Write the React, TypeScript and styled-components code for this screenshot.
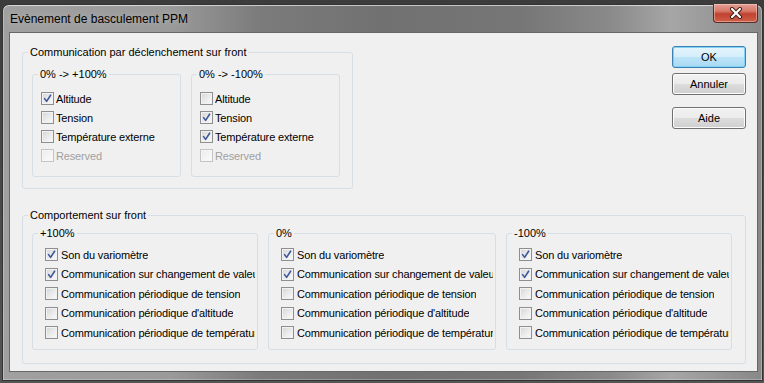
import React from 'react';
import styled, { createGlobalStyle } from 'styled-components';

// Global

const GlobalStyle = createGlobalStyle`
  html,
  body {
    margin: 0;
    padding: 0;
  }

  body {
    width: 764px;
    height: 383px;
    overflow: hidden;
    background: linear-gradient(180deg, #3c3c3c 0%, #555 100%);
    font-family: "Liberation Sans", Arial, sans-serif;
    font-size: 11px;
    color: #000;
  }
`;

// Styled-components

const Desktop = styled.div`
  width: 764px;
  height: 383px;
  box-sizing: border-box;
  padding: 4px 1px 2px 2px;
  display: flex;
`;

const Window = styled.div`
  flex: 1;
  display: flex;
  flex-direction: column;
  border: 1px solid #333;
  border-radius: 7px 7px 0 0;
  padding: 0 4px 8px 6px;
  background: linear-gradient(
    90deg,
    #a0a0a0 0%,
    #9a9a9a 22%,
    #7b7b7b 34%,
    #717171 50%,
    #767676 68%,
    #8a8a8a 80%,
    #a6a6a6 88%,
    #9a9a9a 93%,
    #888 100%
  );
  box-shadow: inset 0 1px 0 rgba(255, 255, 255, 0.6), inset 1px 0 0 rgba(255, 255, 255, 0.3),
    inset -1px 0 0 rgba(255, 255, 255, 0.3), inset 0 -1px 0 rgba(255, 255, 255, 0.25);
`;

const TitleBar = styled.div`
  height: 27px;
  display: flex;
  justify-content: space-between;
  align-items: flex-start;
`;

const Title = styled.span`
  align-self: center;
  padding: 1px 0 0 1px;
  font-size: 12px;
  color: #000;
  text-shadow: 0 0 6px rgba(255, 255, 255, 0.35);
`;

const CloseButton = styled.div`
  width: 45px;
  height: 19px;
  box-sizing: border-box;
  margin-top: -1px;
  display: flex;
  align-items: center;
  justify-content: center;
  border: 1px solid #5a2a24;
  border-top: none;
  border-radius: 0 0 4px 4px;
  background: linear-gradient(180deg, #e4a195 0%, #d67867 40%, #c2412f 55%, #cc6049 100%);
  box-shadow: inset 0 0 0 1px rgba(255, 220, 210, 0.45);
`;

const Client = styled.div`
  flex: 1;
  display: flex;
  flex-direction: column;
  border: 1px solid #686868;
  background: #f0f0f0;
  padding: 13px 11px 0 12px;
`;

const TopRow = styled.div`
  display: flex;
  justify-content: space-between;
  align-items: flex-start;
`;

const GroupBox = styled.fieldset<{ $w: number; $h: number; $mt?: number }>`
  box-sizing: border-box;
  width: ${(p) => p.$w}px;
  height: ${(p) => p.$h}px;
  margin: ${(p) => p.$mt || 0}px 0 0 0;
  padding: 0;
  border: 1px solid #d5dfe5;
  border-radius: 3px;
  min-width: 0;
`;

const Legend = styled.legend`
  margin-left: 5px;
  padding: 0 2px;
  font-size: 11px;
  line-height: 13px;
  color: #000;
`;

const GroupRow = styled.div<{ $pt: number }>`
  display: flex;
  gap: 10px;
  padding: ${(p) => p.$pt}px 0 0 9px;
`;

const OptionList = styled.div<{ $pt: number }>`
  display: flex;
  flex-direction: column;
  padding-top: ${(p) => p.$pt}px;
`;

const Option = styled.label<{ $h: number; $pl: number; $gap: number; $disabled?: boolean }>`
  height: ${(p) => p.$h}px;
  display: flex;
  align-items: center;
  gap: ${(p) => p.$gap}px;
  padding: 0 2px 0 ${(p) => p.$pl}px;
  color: ${(p) => (p.$disabled ? '#a0a0a0' : '#000')};
  white-space: nowrap;
  overflow: hidden;
`;

const Box = styled.span<{ $disabled?: boolean }>`
  flex: none;
  position: relative;
  width: 13px;
  height: 13px;
  box-sizing: border-box;
  border: 1px solid ${(p) => (p.$disabled ? '#c4c4c4' : '#8e8f8f')};
  background: ${(p) =>
    p.$disabled
      ? 'linear-gradient(135deg, #ececec 0%, #fbfbfb 100%)'
      : 'linear-gradient(135deg, #d2d4d7 0%, #e8e8e8 45%, #fbfbfb 100%)'};
  box-shadow: inset 0 0 0 1px ${(p) => (p.$disabled ? '#f6f6f6' : '#f2f2f2')};
`;

const Check = styled.svg`
  position: absolute;
  left: 0;
  top: 0;
`;

const LabelText = styled.span`
  overflow: hidden;
  white-space: nowrap;
  letter-spacing: -0.15px;
`;

const ButtonColumn = styled.div`
  display: flex;
  flex-direction: column;
`;

const Button = styled.button<{ $default?: boolean; $mt: number }>`
  width: 74px;
  height: 22px;
  margin-top: ${(p) => p.$mt}px;
  padding: 0;
  font-family: "Liberation Sans", Arial, sans-serif;
  font-size: 11px;
  color: #000;
  border-radius: 3px;
  border: 1px solid ${(p) => (p.$default ? '#3c7fb1' : '#707070')};
  background: ${(p) =>
    p.$default
      ? 'linear-gradient(180deg, #e5f4fc 0%, #d4eefb 50%, #bde4f8 50%, #a9d9f3 100%)'
      : 'linear-gradient(180deg, #f2f2f2 0%, #ebebeb 50%, #dddddd 50%, #cfcfcf 100%)'};
  box-shadow: inset 0 0 0 1px ${(p) => (p.$default ? '#7fd3f7' : '#fcfcfc')};
`;

// Data

type Item = { label: string; checked?: boolean; disabled?: boolean };

const leftTop: Item[] = [
  { label: 'Altitude', checked: true },
  { label: 'Tension' },
  { label: 'Température externe' },
  { label: 'Reserved', disabled: true },
];

const rightTop: Item[] = [
  { label: 'Altitude' },
  { label: 'Tension', checked: true },
  { label: 'Température externe', checked: true },
  { label: 'Reserved', disabled: true },
];

const behaviour: Item[] = [
  { label: 'Son du variomètre', checked: true },
  { label: 'Communication sur changement de valeur', checked: true },
  { label: 'Communication périodique de tension' },
  { label: "Communication périodique d'altitude" },
  { label: 'Communication périodique de température' },
];

const bottomGroups = [
  { title: '+100%', width: 226 },
  { title: '0%', width: 228 },
  { title: '-100%', width: 226 },
];

// JSX-Components

const CheckBox: React.FC<{ checked?: boolean; disabled?: boolean }> = ({ checked, disabled }) => (
  <Box $disabled={disabled}>
    {checked && (
      <Check width="11" height="11" viewBox="0 0 11 11">
        <path
          d="M2.6 5.6 L4.6 8.4 L8.6 2.2"
          fill="none"
          stroke="#40589a"
          strokeWidth="1.6"
          strokeLinecap="round"
          strokeLinejoin="round"
        />
      </Check>
    )}
  </Box>
);

const Options: React.FC<{ items: Item[]; rowH: number; pl: number; gap: number; pt: number }> = ({
  items,
  rowH,
  pl,
  gap,
  pt,
}) => (
  <OptionList $pt={pt}>
    {items.map((it) => (
      <Option key={it.label} $h={rowH} $pl={pl} $gap={gap} $disabled={it.disabled}>
        <CheckBox checked={it.checked} disabled={it.disabled} />
        <LabelText>{it.label}</LabelText>
      </Option>
    ))}
  </OptionList>
);

const App: React.FC = () => {
  return (
    <>
      <GlobalStyle />
      <Desktop>
        <Window>
          <TitleBar>
            <Title>Evènement de basculement PPM</Title>
            <CloseButton>
              <svg width="14" height="12" viewBox="0 0 14 12">
                <path d="M3 2 L11 10 M11 2 L3 10" stroke="#3a1a16" strokeWidth="4" strokeLinecap="round" />
                <path d="M3 2 L11 10 M11 2 L3 10" stroke="#fff" strokeWidth="2.2" strokeLinecap="round" />
              </svg>
            </CloseButton>
          </TitleBar>
          <Client>
            <TopRow>
              <GroupBox $w={331} $h={143}>
                <Legend>Communication par déclenchement sur front</Legend>
                <GroupRow $pt={9}>
                  <GroupBox $w={149} $h={109}>
                    <Legend>0% -&gt; +100%</Legend>
                    <Options items={leftTop} rowH={19} pl={8} gap={2} pt={8} />
                  </GroupBox>
                  <GroupBox $w={149} $h={109}>
                    <Legend>0% -&gt; -100%</Legend>
                    <Options items={rightTop} rowH={19} pl={8} gap={2} pt={8} />
                  </GroupBox>
                </GroupRow>
              </GroupBox>
              <ButtonColumn>
                <Button $default $mt={0}>
                  OK
                </Button>
                <Button $mt={5}>Annuler</Button>
                <Button $mt={12}>Aide</Button>
              </ButtonColumn>
            </TopRow>
            <GroupBox $w={724} $h={155} $mt={20}>
              <Legend>Comportement sur front</Legend>
              <GroupRow $pt={5}>
                {bottomGroups.map((g) => (
                  <GroupBox key={g.title} $w={g.width} $h={123}>
                    <Legend>{g.title}</Legend>
                    <Options items={behaviour} rowH={19.5} pl={12} gap={3} pt={5} />
                  </GroupBox>
                ))}
              </GroupRow>
            </GroupBox>
          </Client>
        </Window>
      </Desktop>
    </>
  );
};

export default App;
